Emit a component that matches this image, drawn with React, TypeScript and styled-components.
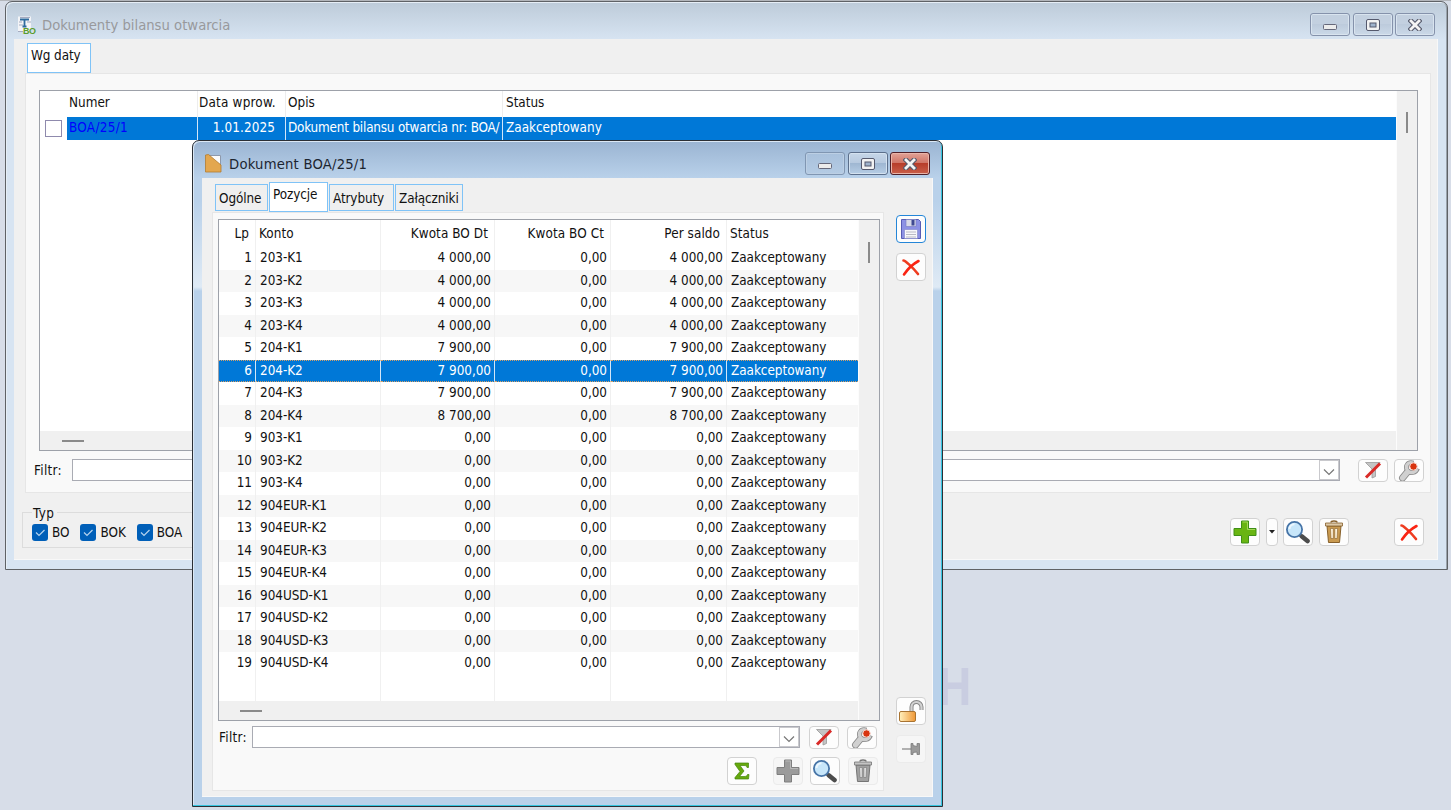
import type { ReactNode } from "react";
import styled, { createGlobalStyle, css } from "styled-components";

const GlobalStyle = createGlobalStyle`
  * {
    box-sizing: border-box;
  }

  body {
    margin: 0;
    overflow: hidden;
    background: #d7dde8;
    color: #111;
    font-family: "DejaVu Sans Condensed", "DejaVu Sans", sans-serif;
    font-stretch: condensed;
    font-size: 13.4px;
    letter-spacing: -0.03px;
    cursor: default;
  }
`;

const Desktop = styled.div`
  position: relative;
  width: 1451px;
  height: 810px;
  overflow: hidden;
  border-top: 1px solid #b3b6bb;
  background: #d7dde8;
`;

const Watermark = styled.div`
  position: absolute;
  right: 480px;
  top: 656px;
  font: bold 53px/60px "Liberation Sans", sans-serif;
  color: #c9cde1;
  transform: scaleX(0.87);
  transform-origin: right;
`;

const Window = styled.section<{ $active?: boolean }>`
  position: absolute;
  display: flex;
  flex-direction: column;
  ${({ $active }) =>
    $active
      ? css`
          left: 192px;
          top: 139px;
          width: 751px;
          height: 667px;
          padding: 0 9px 9px;
          border: 1px solid #2b2f35;
          border-radius: 7px 7px 0 0;
          background: linear-gradient(#9ab4d2, #b9d1ea 37px, #b9d1ea 60px, #dfeaf5 146px, #b9d1ea 150px);
          box-shadow: inset -1px -1px #35c5e0, inset 1px 1px #dbe8f5;
        `
      : css`
          left: 5px;
          top: 0;
          width: 1443px;
          height: 569px;
          padding: 0 9px 9px 8px;
          border: 1px solid #5f6266;
          border-radius: 7px 7px 0 0;
          background: linear-gradient(#bdcbd9, #d7e4f2 38px);
          box-shadow: inset 1px 1px #e6eef6, inset -1px 0 #9aa3ad;
        `}
`;

const TitleBar = styled.header<{ $active?: boolean }>`
  display: flex;
  align-items: center;
  flex: none;
  height: 37px;
  padding: ${({ $active }) => ($active ? "8px 3px 0 3px" : "8px 3px 0 4px")};
  font-size: 14.7px;
  letter-spacing: ${({ $active }) => ($active ? "0.2px" : "0")};
  color: ${({ $active }) => ($active ? "#1c2530" : "#98999c")};
`;

const Title = styled.span<{ $gap: number }>`
  flex: 1;
  margin-left: ${({ $gap }) => $gap}px;
  white-space: nowrap;
`;

const Captions = styled.div`
  display: flex;
  gap: 2.5px;
`;

const Caption = styled.span<{ $kind?: "dim" | "close" | "plain" }>`
  display: flex;
  align-items: center;
  justify-content: center;
  width: 40px;
  height: 23px;
  border: 1px solid #8592ab;
  border-radius: 3px;
  background: linear-gradient(#c3d0df, #c3d0e0 50%, #bdcbdc 50%, #cbd9e8);
  box-shadow: inset 0 0 0 1px #d9e4ef;
  ${({ $kind }) =>
    $kind === "close" &&
    css`
      border-color: #501f28;
      background: linear-gradient(#e2a297, #cf7465 48%, #b73d2a 50%, #c9604b);
      box-shadow: inset 0 0 0 1px #e9b4a8;
    `}
  ${({ $kind }) =>
    $kind === "plain" &&
    css`
      border-color: #5c6f8b;
      background: linear-gradient(#c6d6e8, #b6c9df 48%, #9fb7d2 50%, #b6cde5);
      box-shadow: inset 0 0 0 1px #d4e2f0;
    `}
  ${({ $kind }) =>
    $kind === "dim" &&
    css`
      border-color: #8096b2;
      background: linear-gradient(#a9c1dc, #b4cbe4);
      box-shadow: inset 0 0 0 1px #bccfe4;
    `}
`;

const Client = styled.div<{ $active?: boolean }>`
  display: flex;
  flex: 1;
  flex-direction: column;
  min-height: 0;
  padding: ${({ $active }) => ($active ? "4px 0 5px 10px" : "4px 6px 0 11px")};
  border: solid #f8f8f8;
  border-width: 0 1px 1px 0;
  background: #f0f0f0;
`;

const Tabs = styled.nav<{ $indent?: number }>`
  display: flex;
  align-items: flex-end;
  gap: 1px;
  flex: none;
  height: 30px;
  padding-left: ${({ $indent = 2 }) => $indent}px;
`;

const Tab = styled.span<{ $width: number; $selected?: boolean }>`
  width: ${({ $width }) => $width}px;
  height: ${({ $selected }) => ($selected ? 30 : 27)}px;
  margin-bottom: ${({ $selected }) => ($selected ? 0 : 1)}px;
  padding-left: 3px;
  border: 1px solid #7fc3f7;
  background: ${({ $selected }) => ($selected ? "#fff" : "#efefef")};
  line-height: ${({ $selected }) => ($selected ? 24 : 27)}px;
  letter-spacing: -0.1px;
  white-space: nowrap;
`;

const Panel = styled.div<{ $active?: boolean }>`
  display: flex;
  flex-direction: column;
  flex: none;
  width: ${({ $active }) => ($active ? "672px" : "auto")};
  height: ${({ $active }) => ($active ? 579 : 420)}px;
  padding: ${({ $active }) => ($active ? "6px 2px 0 5px" : "16px 6px 0 13px")};
  border: 1px solid #e6e6e6;
  background: #f9f9f9;
`;

const Grid = styled.div<{ $height: number; $width: number }>`
  display: grid;
  flex: none;
  grid-template: minmax(0, 1fr) 19px / minmax(0, 1fr) 21px;
  width: ${({ $width }) => $width}px;
  height: ${({ $height }) => $height}px;
  border: 1px solid #9da1a9;
  background: #fff;
`;

const Rail = styled.div<{ $vertical?: boolean; $offset: number }>`
  display: flex;
  background: #f0f0f0;
  ${({ $vertical, $offset }) =>
    $vertical
      ? css`
          grid-area: 1 / 2 / 3 / 3;
          justify-content: center;
          padding-top: ${$offset}px;
          border-left: 1px solid #fcfcfc;
        `
      : css`
          align-items: center;
          padding-left: ${$offset}px;
        `}
  &::after {
    content: "";
    width: ${({ $vertical }) => ($vertical ? 2 : 22)}px;
    height: ${({ $vertical }) => ($vertical ? 21 : 2)}px;
    background: #8a8a8a;
  }
`;

const DocColumns = css`
  display: grid;
  grid-template-columns: 27px 130px 88px 217px 1fr;
`;

const DocHeader = styled.div`
  ${DocColumns}
  height: 26px;
  line-height: 24px;
`;

const DocRow = styled.div`
  ${DocColumns}
  height: 23px;
  line-height: 22px;
`;

const DocCell = styled.span<{ $selected?: boolean; $link?: boolean; $right?: boolean; $left?: number; $spacing?: number }>`
  padding: 0 ${({ $right }) => ($right ? 10 : 0)}px 0 ${({ $left = 2 }) => $left}px;
  border-left: 1px solid ${({ $selected }) => ($selected ? "#d3e6f8" : "#ededed")};
  overflow: hidden;
  letter-spacing: ${({ $spacing = 0 }) => $spacing}px;
  text-align: ${({ $right }) => ($right ? "right" : "left")};
  white-space: nowrap;
  background: ${({ $selected }) => ($selected ? "#0078d7" : "transparent")};
  color: ${({ $selected, $link }) => ($link ? "#0000ff" : $selected ? "#fff" : "#111")};
  &:nth-child(-n + 2) {
    border-left-color: transparent;
  }
`;

const EmptyCheck = styled.span`
  width: 17px;
  height: 17px;
  margin: 3px 0 0 5px;
  border: 1px solid #8f8aad;
  background: #fff;
`;

const Lines = styled.div`
  display: grid;
  grid-template-columns: 37px 125px 114px 116px 116px 131px;
  grid-template-rows: 27px repeat(19, 22.5px) 26px;
  width: 639px;
`;

const LineCell = styled.span<{
  $align?: "right";
  $header?: boolean;
  $striped?: boolean;
  $selected?: boolean;
}>`
  padding: 0 ${({ $header }) => ($header ? 6 : 3)}px 0 ${({ $header }) => ($header ? 3 : 4)}px;
  border-right: 1px solid ${({ $selected }) => ($selected ? "#d3e6f8" : "#f0f0f0")};
  overflow: hidden;
  line-height: ${({ $header }) => ($header ? 27 : 22)}px;
  letter-spacing: ${({ $header }) => ($header ? "0.08px" : "inherit")};
  text-align: ${({ $align }) => $align ?? "left"};
  white-space: pre;
  background: ${({ $striped, $selected }) => ($selected ? "#0078d7" : $striped ? "#f7f7f7" : "#fff")};
  color: ${({ $selected }) => ($selected ? "#fff" : "#111")};
  ${({ $selected }) =>
    $selected &&
    css`
      border-top: 1px dotted #d6a067;
      border-bottom: 1px dotted #d6a067;
      line-height: 20px;
    `}
  &:nth-child(6n) {
    border-right: 0;
  }
`;

const FilterRow = styled.div<{ $active?: boolean }>`
  display: flex;
  align-items: center;
  flex: none;
  height: 24px;
  margin-top: ${({ $active }) => ($active ? 4 : 7)}px;
  margin-left: ${({ $active }) => ($active ? 1 : -5)}px;
`;

const FilterLabel = styled.span<{ $width: number }>`
  width: ${({ $width }) => $width}px;
  letter-spacing: 0.3px;
`;

const Combo = styled.div<{ $width: number }>`
  display: flex;
  justify-content: flex-end;
  width: ${({ $width }) => $width}px;
  height: 22px;
  border: 1px solid #a9abb3;
  background: #fff;
`;

const ComboArrow = styled.span`
  display: flex;
  align-items: center;
  justify-content: center;
  width: 20px;
  padding-top: 3px;
  border: 1px solid #c9c9cd;
`;

const ToolButton = styled.span<{ $width?: number; $height?: number; $flat?: boolean; $focus?: boolean; $left?: number }>`
  display: flex;
  flex: none;
  align-items: center;
  justify-content: center;
  width: ${({ $width = 30 }) => $width}px;
  height: ${({ $height = 28 }) => $height}px;
  margin-left: ${({ $left = 0 }) => $left}px;
  border: ${({ $focus, $flat }) => ($focus ? "1px solid #2486d8" : $flat ? "1px solid #ebebeb" : "1px solid #d2d2d2")};
  border-radius: 4px;
  background: ${({ $flat }) => ($flat ? "#f6f6f6" : "#fdfdfd")};
  overflow: hidden;
`;

const BottomBar = styled.div`
  display: flex;
  align-items: flex-end;
  height: 36px;
  margin: 17px 7px 0 -3px;
`;

const TypeGroup = styled.fieldset`
  display: flex;
  gap: 11px;
  width: 300px;
  height: 42px;
  margin: 0 auto -2px 0;
  padding: 5px 0 0 9px;
  border: 1px solid #dcdcdc;
`;

const TypeLegend = styled.legend`
  height: 13px;
  padding: 0 3px 0 1px;
  line-height: 15px;
  letter-spacing: 0.4px;
`;

const Option = styled.label`
  display: flex;
  align-items: center;
  gap: 4px;
  height: 17px;
`;

const DialogBody = styled.div`
  display: flex;
  flex: 1;
`;

const SideBar = styled.aside`
  display: flex;
  flex-direction: column;
  align-items: center;
  gap: 10px;
  padding: 3px 0 0 12px;
`;

const SideSpacer = styled.div`
  height: 396px;
`;

const Actions = styled.div`
  display: flex;
  margin: 8px 3px 0 0;
  justify-content: flex-end;
`;

const MinimizeGlyph = () => (
  <svg width="14" height="16" viewBox="0 0 14 16">
    <rect x=".5" y="7.5" width="13" height="5" rx="1" fill="#ececec" stroke="#66687a" />
  </svg>
);

const MaximizeGlyph = () => (
  <svg width="14" height="12" viewBox="0 0 14 12">
    <rect x=".5" y=".5" width="13" height="11" rx="1.5" fill="#f2f2f2" stroke="#55596d" />
    <rect x="4" y="4" width="6" height="4" fill="#9fb3cc" stroke="#55596d" />
  </svg>
);

const CloseGlyph = () => (
  <svg width="14" height="12" viewBox="0 0 14 12">
    <path d="M3 2l8 8M11 2l-8 8" stroke="#565a6c" strokeWidth="5" strokeLinecap="square" />
    <path d="M3 2l8 8M11 2l-8 8" stroke="#f4f4f4" strokeWidth="2.8" strokeLinecap="square" />
  </svg>
);

const BalanceIcon = () => (
  <svg width="20" height="18" viewBox="0 0 20 18">
    <rect x="0" y=".5" width="13" height="15" fill="#f3f4f7" />
    <path d="M2 1.5h10M1 6h3M9 6h4M1 9h4M0 15.5h5" stroke="#a5abc0" />
    <path d="M2 3.5h9M6.5 3.5v7M4.5 10.5h4" stroke="#2e6b9e" strokeWidth="1.8" />
    <text
      x="5"
      y="17.5"
      fontFamily="Liberation Sans, sans-serif"
      fontWeight="bold"
      fontSize="9"
      letterSpacing="-.6"
      fill="#5b9c2d"
    >
      BO
    </text>
  </svg>
);

const FolderIcon = () => (
  <svg width="17" height="19" viewBox="0 0 17 19">
    <path d="M3 1.5h12.5v15H3z" fill="#fbfbfb" stroke="#8e99ab" />
    <path d="M.5 1l3-.5L16 11v7H.5z" fill="#e3a74f" stroke="#b37c31" strokeWidth=".8" />
  </svg>
);

const ChevronIcon = () => (
  <svg width="12" height="8" viewBox="0 0 12 8">
    <path d="M1 1.5l5 5 5-5" fill="none" stroke="#777" strokeWidth="1.2" />
  </svg>
);

const FilterIcon = () => (
  <svg width="18" height="18" viewBox="0 0 18 18">
    <path d="M1.5 1.5H16l-4.5 6v8L8 17V8z" fill="#c4c4c4" stroke="#999" strokeWidth=".8" />
    <path d="M2 16.5L16 2.5" stroke="#d92a27" strokeWidth="3" />
  </svg>
);

const WrenchIcon = () => (
  <svg width="22" height="21" viewBox="0 0 22 21">
    <path d="M4.5 18L9 12.5" stroke="#8b8b8b" strokeWidth="7" strokeLinecap="round" />
    <path d="M15.5 3C9 1.5 7 6.5 9.5 10.5c2.500 3.500 8.500 2.500 10-2" fill="none" stroke="#8b8b8b" strokeWidth="4.8" />
    <path d="M4.500 18L9 12.500" stroke="#d0d0d0" strokeWidth="5.200" strokeLinecap="round" />
    <path d="M15 3C9 1.500 7 6.500 9.500 10.500c2.500 3.500 8 2.500 9.600-1.500" fill="none" stroke="#d0d0d0" strokeWidth="3.200" />
    <circle cx="15.500" cy="6.500" r="3.700" fill="#d8340f" stroke="#f6d0c6" strokeWidth="1" />
  </svg>
);

const PlusIcon = ({ disabled }: { disabled?: boolean }) => (
  <svg width="24" height="24" viewBox="0 0 24 24">
    <path
      d="M8.5 1h7v7.5H23v7h-7.5V23h-7v-7.5H1v-7h7.5z"
      fill={disabled ? "#9b9b9b" : "#69b512"}
      stroke={disabled ? "#7e7e7e" : "#3f8f17"}
    />
    <path d="M9.5 2h5v7.5H22" fill="none" stroke={disabled ? "#b8b8b8" : "#a5d75a"} />
  </svg>
);

const SearchIcon = () => (
  <svg width="26" height="24" viewBox="0 0 26 24">
    <path d="M14 14.5l2.5 2" stroke="#777" strokeWidth="3" />
    <path d="M17 16.5l5.5 4.5" stroke="#4c4c4c" strokeWidth="4.6" strokeLinecap="round" />
    <circle cx="9.5" cy="9.5" r="7.6" fill="#c7e6fa" stroke="#4674a7" strokeWidth="1.8" />
    <path d="M4.5 9a5 5 0 015-4.8" fill="none" stroke="#ecf7fe" strokeWidth="2" />
  </svg>
);

const TrashIcon = ({ disabled }: { disabled?: boolean }) => {
  const line = disabled ? "#757575" : "#87602b";
  return (
    <svg width="20" height="24" viewBox="0 0 20 24">
      <path d="M3 6h14l-1.5 16.5h-11z" fill={disabled ? "#a1a1a1" : "#c99a50"} stroke={line} />
      <path d="M7 2.5c0-2 6-2 6 0" fill="none" stroke={line} strokeWidth="1.5" />
      <path d="M1.5 3h17v3h-17z" fill={disabled ? "#c4c4c4" : "#ddc9a8"} stroke={line} strokeWidth=".8" />
      <path
        d="M6.5 8.5h2.8v10H7zM10.8 8.5h2.8l-.5 10h-2.3z"
        fill={disabled ? "#ddd" : "#fff4dc"}
        stroke={line}
        strokeWidth=".6"
      />
    </svg>
  );
};

const CrossIcon = () => (
  <svg width="20" height="20" viewBox="0 0 20 20">
    <path d="M2.500 3.500c1.500 0 9 6.500 14.500 13.500" fill="none" stroke="#ee3c20" strokeWidth="2.600" strokeLinecap="round" />
    <path d="M17.500 4C12 7 7 11.500 3 17.500" fill="none" stroke="#fa2413" strokeWidth="2.600" strokeLinecap="round" />
  </svg>
);

const SaveIcon = () => (
  <svg width="22" height="22" viewBox="0 0 22 22">
    <path d="M1.5 1.5h17l2 2v17h-19z" fill="#8c91e4" stroke="#575cb4" />
    <path d="M6 1.5h10v7H6z" fill="#d7d9e8" stroke="#7479c0" strokeWidth=".6" />
    <path d="M11.5 2h3v5.500h-3z" fill="#3f4a91" />
    <path d="M4.5 11.5h13v9h-13z" fill="#f7f7fa" stroke="#8085c8" strokeWidth=".6" />
    <path d="M6 14h10M6 16.5h10M6 19h10" stroke="#b9bac5" />
  </svg>
);

const LockIcon = () => (
  <svg width="26" height="24" viewBox="0 0 26 24">
    <defs>
      <linearGradient id="lock">
        <stop stopColor="#fff0bc" />
        <stop offset="1" stopColor="#ef9735" />
      </linearGradient>
    </defs>
    <path d="M13.5 13V8a5 5 0 0110 0v3" fill="none" stroke="#858585" strokeWidth="4" />
    <path d="M13.5 13V8a5 5 0 0110 0v3" fill="none" stroke="#d2d2d2" strokeWidth="2.2" />
    <rect x="1.5" y="12.5" width="16" height="10" rx="1.5" fill="url(#lock)" stroke="#a87331" />
  </svg>
);

const PinIcon = () => (
  <svg width="20" height="14" viewBox="0 0 20 14">
    <path d="M1 7h9" stroke="#999" strokeWidth="1.5" />
    <path d="M10 1.5h2v2l4 1v-3h2.500v11H16V10l-4 .5v2h-2z" fill="#9a9a9a" stroke="#7b7b7b" strokeWidth=".8" />
  </svg>
);

const SumIcon = () => (
  <svg width="16" height="18" viewBox="0 0 16 18">
    <path
      d="M1 1h13.5v4.500H13C12.500 4 12 3.500 10 3.500H6L10 9l-4.500 5.500H10c2 0 3-.5 3.500-2H15L14.500 17H1v-1.500L6 9.500 1 2.500z"
      fill="#67a90e"
      stroke="#44850c"
      strokeWidth=".7"
    />
  </svg>
);

const CheckedIcon = () => (
  <svg width="16" height="17" viewBox="0 0 16 17">
    <rect width="16" height="17" rx="3" fill="#005fb8" />
    <path d="M4 8.500l3 3 5.500-5.500" fill="none" stroke="#b5d3ee" strokeWidth="1.200" />
  </svg>
);

const ArrowIcon = () => (
  <svg width="6" height="4" viewBox="0 0 6 4">
    <path d="M0 0h6L3 3.500z" fill="#222" />
  </svg>
);

type FrameProps = { title: string; icon: ReactNode; active?: boolean; children: ReactNode };

const Frame = ({ title, icon, active, children }: FrameProps) => (
  <Window $active={active}>
    <TitleBar $active={active}>
      {icon}
      <Title $gap={active ? 7 : 4}>{title}</Title>
      <Captions>
        <Caption $kind={active ? "dim" : undefined}>
          <MinimizeGlyph />
        </Caption>
        <Caption $kind={active ? "plain" : undefined}>
          <MaximizeGlyph />
        </Caption>
        <Caption $kind={active ? "close" : undefined}>
          <CloseGlyph />
        </Caption>
      </Captions>
    </TitleBar>
    <Client $active={active}>{children}</Client>
  </Window>
);

const Filter = ({ active }: { active?: boolean }) => (
  <FilterRow $active={active}>
    <FilterLabel $width={active ? 33 : 38}>Filtr:</FilterLabel>
    <Combo $width={active ? 548 : 1268}>
      <ComboArrow>
        <ChevronIcon />
      </ComboArrow>
    </Combo>
    <ToolButton $height={23} $left={active ? 9 : 18}>
      <FilterIcon />
    </ToolButton>
    <ToolButton $height={23} $left={active ? 8 : 6}>
      <WrenchIcon />
    </ToolButton>
  </FilterRow>
);

const headers = ["Lp", "Konto", "Kwota BO Dt", "Kwota BO Ct", "Per saldo", "Status"];

const lines: [string, string][] = [
  ["203-K1", "4 000,00"],
  ["203-K2", "4 000,00"],
  ["203-K3", "4 000,00"],
  ["203-K4", "4 000,00"],
  ["204-K1", "7 900,00"],
  ["204-K2", "7 900,00"],
  ["204-K3", "7 900,00"],
  ["204-K4", "8 700,00"],
  ["903-K1", "0,00"],
  ["903-K2", "0,00"],
  ["903-K4", "0,00"],
  ["904EUR-K1", "0,00"],
  ["904EUR-K2", "0,00"],
  ["904EUR-K3", "0,00"],
  ["904EUR-K4", "0,00"],
  ["904USD-K1", "0,00"],
  ["904USD-K2", "0,00"],
  ["904USD-K3", "0,00"],
  ["904USD-K4", "0,00"],
];

const alignOf = (column: number) => (column === 1 || column === 5 ? undefined : "right");

const App = () => (
  <>
    <GlobalStyle />
    <Desktop>
      <Watermark>H</Watermark>
      <Frame title="Dokumenty bilansu otwarcia" icon={<BalanceIcon />}>
        <Tabs>
          <Tab $width={64} $selected>
            Wg daty
          </Tab>
        </Tabs>
        <Panel>
          <Grid $width={1379} $height={361}>
            <div>
              <DocHeader>
                <span />
                <DocCell $left={1}>Numer</DocCell>
                <DocCell $left={1} $spacing={0.2}>
                  Data wprow.
                </DocCell>
                <DocCell>Opis</DocCell>
                <DocCell $left={3}>Status</DocCell>
              </DocHeader>
              <DocRow>
                <EmptyCheck />
                <DocCell $selected $link $left={1} $spacing={0.3}>
                  BOA/25/1
                </DocCell>
                <DocCell $selected $right $spacing={0.1}>
                  1.01.2025
                </DocCell>
                <DocCell $selected $spacing={-0.2}>
                  Dokument bilansu otwarcia nr: BOA/
                </DocCell>
                <DocCell $selected $left={3}>
                  Zaakceptowany
                </DocCell>
              </DocRow>
            </div>
            <Rail $vertical $offset={21} />
            <Rail $offset={22} />
          </Grid>
          <Filter />
        </Panel>
        <BottomBar>
          <TypeGroup>
            <TypeLegend>Typ</TypeLegend>
            {["BO", "BOK", "BOA"].map((name) => (
              <Option key={name}>
                <CheckedIcon />
                {name}
              </Option>
            ))}
          </TypeGroup>
          <ToolButton>
            <PlusIcon />
          </ToolButton>
          <ToolButton $width={12} $left={6}>
            <ArrowIcon />
          </ToolButton>
          <ToolButton $left={5}>
            <SearchIcon />
          </ToolButton>
          <ToolButton $left={6}>
            <TrashIcon />
          </ToolButton>
          <ToolButton $left={45}>
            <CrossIcon />
          </ToolButton>
        </BottomBar>
      </Frame>

      <Frame title="Dokument BOA/25/1" icon={<FolderIcon />} active>
        <Tabs $indent={3}>
          <Tab $width={53}>Ogólne</Tab>
          <Tab $width={59} $selected>
            Pozycje
          </Tab>
          <Tab $width={65}>Atrybuty</Tab>
          <Tab $width={68}>Załączniki</Tab>
        </Tabs>
        <DialogBody>
          <Panel $active>
            <Grid $width={662} $height={502}>
              <Lines>
                {headers.map((name, column) => (
                  <LineCell key={name} $header $align={alignOf(column)}>
                    {name}
                  </LineCell>
                ))}
                {lines.map(([account, amount], row) =>
                  [row + 1, account, amount, "0,00", amount, "Zaakceptowany"].map((value, column) => (
                    <LineCell
                      key={`${row}-${column}`}
                      $align={alignOf(column)}
                      $striped={row % 2 === 1}
                      $selected={row === 5}
                    >
                      {value}
                    </LineCell>
                  ))
                )}
                {headers.map((name) => (
                  <LineCell key={name} />
                ))}
              </Lines>
              <Rail $vertical $offset={22} />
              <Rail $offset={21} />
            </Grid>
            <Filter active />
            <Actions>
              <ToolButton>
                <SumIcon />
              </ToolButton>
              <ToolButton $flat $left={16}>
                <PlusIcon disabled />
              </ToolButton>
              <ToolButton $left={7}>
                <SearchIcon />
              </ToolButton>
              <ToolButton $flat $left={8}>
                <TrashIcon disabled />
              </ToolButton>
            </Actions>
          </Panel>
          <SideBar>
            <ToolButton $focus>
              <SaveIcon />
            </ToolButton>
            <ToolButton>
              <CrossIcon />
            </ToolButton>
            <SideSpacer />
            <ToolButton>
              <LockIcon />
            </ToolButton>
            <ToolButton $flat>
              <PinIcon />
            </ToolButton>
          </SideBar>
        </DialogBody>
      </Frame>
    </Desktop>
  </>
);

export default App;
